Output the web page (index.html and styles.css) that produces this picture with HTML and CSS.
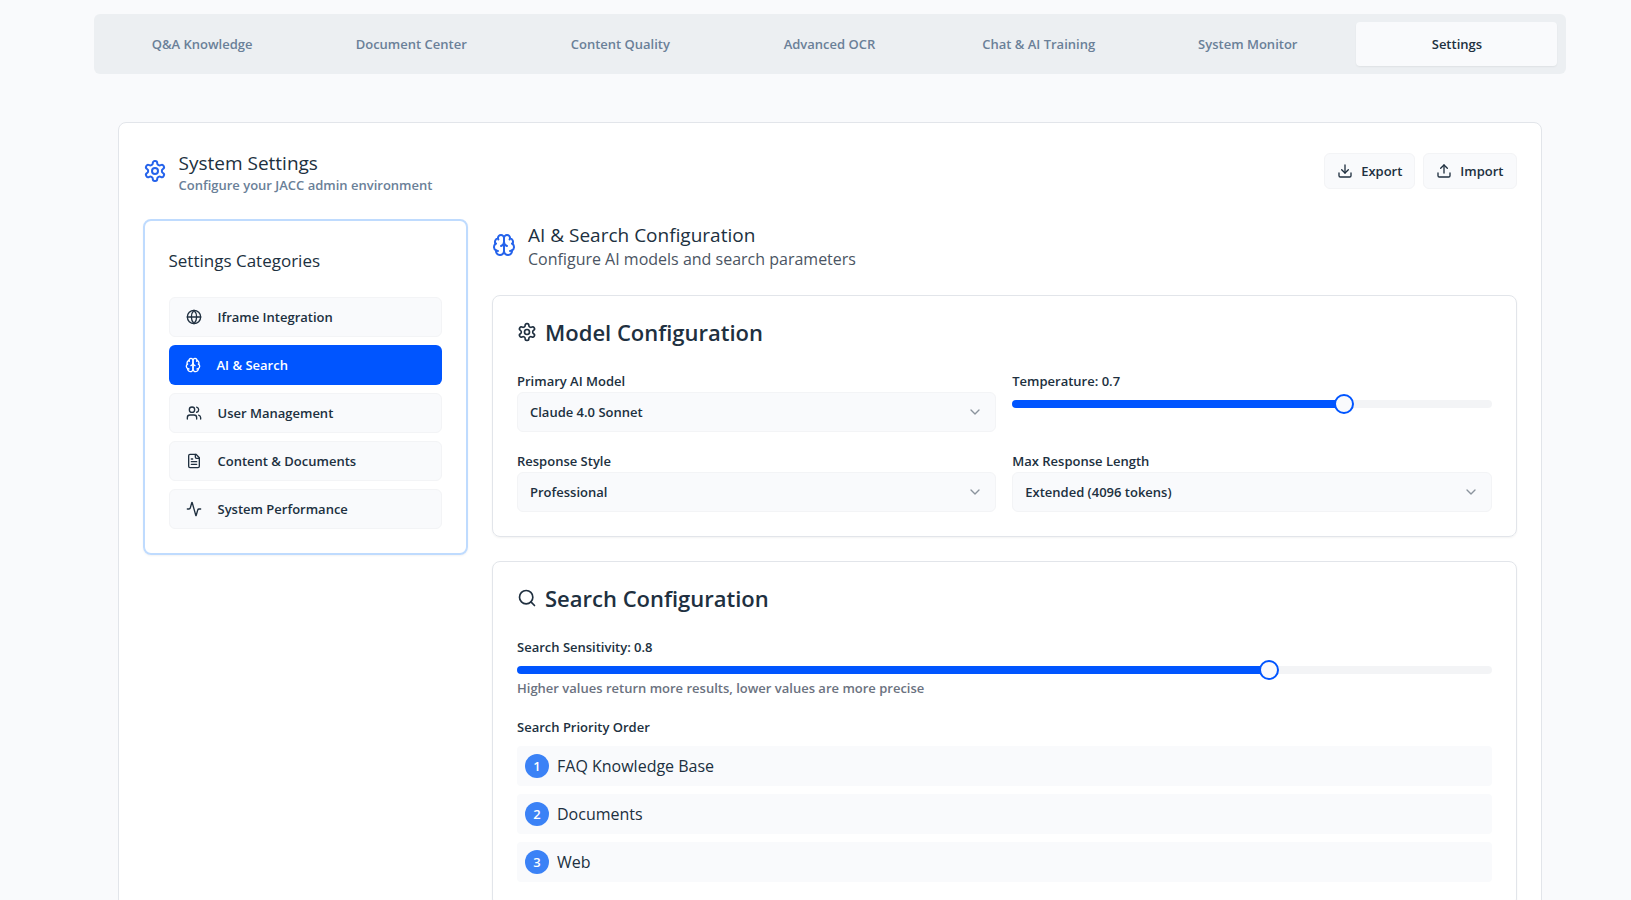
FILE: index.html
```
<!DOCTYPE html>
<html lang="en">
<head>
<meta charset="utf-8">
<title>System Settings</title>
<meta name="viewport" content="width=device-width, initial-scale=1">
<link rel="stylesheet" href="styles.css">
</head>
<body>
<svg class="sprite" aria-hidden="true">
  <symbol id="gear" viewBox="0 0 24 24"><path d="M12.22 2h-.44a2 2 0 0 0-2 2v.18a2 2 0 0 1-1 1.73l-.43.25a2 2 0 0 1-2 0l-.15-.08a2 2 0 0 0-2.73.73l-.22.38a2 2 0 0 0 .73 2.73l.15.1a2 2 0 0 1 1 1.72v.51a2 2 0 0 1-1 1.74l-.15.09a2 2 0 0 0-.73 2.73l.22.38a2 2 0 0 0 2.73.73l.15-.08a2 2 0 0 1 2 0l.43.25a2 2 0 0 1 1 1.73V20a2 2 0 0 0 2 2h.44a2 2 0 0 0 2-2v-.18a2 2 0 0 1 1-1.73l.43-.25a2 2 0 0 1 2 0l.15.08a2 2 0 0 0 2.73-.73l.22-.39a2 2 0 0 0-.73-2.73l-.15-.08a2 2 0 0 1-1-1.74v-.5a2 2 0 0 1 1-1.74l.15-.09a2 2 0 0 0 .73-2.73l-.22-.38a2 2 0 0 0-2.73-.73l-.15.08a2 2 0 0 1-2 0l-.43-.25a2 2 0 0 1-1-1.73V4a2 2 0 0 0-2-2z"/><circle cx="12" cy="12" r="3"/></symbol>
  <symbol id="brain" viewBox="0 0 24 24"><path d="M12 5a3 3 0 1 0-5.997.125 4 4 0 0 0-2.526 5.77 4 4 0 0 0 .556 6.588A4 4 0 1 0 12 18Z"/><path d="M12 5a3 3 0 1 1 5.997.125 4 4 0 0 1 2.526 5.77 4 4 0 0 1-.556 6.588A4 4 0 1 1 12 18Z"/><path d="M15 13a4.5 4.5 0 0 1-3-4 4.5 4.5 0 0 1-3 4"/><path d="M17.599 6.5a3 3 0 0 0 .399-1.375"/><path d="M6.003 5.125A3 3 0 0 0 6.401 6.5"/><path d="M3.477 10.896a4 4 0 0 1 .585-.396"/><path d="M19.938 10.5a4 4 0 0 1 .585.396"/><path d="M6 18a4 4 0 0 1-1.967-.516"/><path d="M19.967 17.484A4 4 0 0 1 18 18"/></symbol>
  <symbol id="globe" viewBox="0 0 24 24"><circle cx="12" cy="12" r="10"/><path d="M12 2a14.5 14.5 0 0 0 0 20 14.5 14.5 0 0 0 0-20"/><path d="M2 12h20"/></symbol>
  <symbol id="users" viewBox="0 0 24 24"><path d="M16 21v-2a4 4 0 0 0-4-4H6a4 4 0 0 0-4 4v2"/><circle cx="9" cy="7" r="4"/><path d="M22 21v-2a4 4 0 0 0-3-3.87"/><path d="M16 3.13a4 4 0 0 1 0 7.75"/></symbol>
  <symbol id="file" viewBox="0 0 24 24"><path d="M15 2H6a2 2 0 0 0-2 2v16a2 2 0 0 0 2 2h12a2 2 0 0 0 2-2V7Z"/><path d="M14 2v4a2 2 0 0 0 2 2h4"/><path d="M10 9H8"/><path d="M16 13H8"/><path d="M16 17H8"/></symbol>
  <symbol id="activity" viewBox="0 0 24 24"><path d="M22 12h-2.480a2 2 0 0 0-1.930 1.460l-2.350 8.360a.25.25 0 0 1-.480 0L9.240 2.180a.25.25 0 0 0-.480 0l-2.350 8.360A2 2 0 0 1 4.490 12H2"/></symbol>
  <symbol id="search" viewBox="0 0 24 24"><circle cx="11" cy="11" r="8"/><path d="m21 21-4.300-4.300"/></symbol>
  <symbol id="download" viewBox="0 0 24 24"><path d="M21 15v4a2 2 0 0 1-2 2H5a2 2 0 0 1-2-2v-4"/><path d="m7 10 5 5 5-5"/><path d="M12 15V3"/></symbol>
  <symbol id="upload" viewBox="0 0 24 24"><path d="M21 15v4a2 2 0 0 1-2 2H5a2 2 0 0 1-2-2v-4"/><path d="m17 8-5-5-5 5"/><path d="M12 3v12"/></symbol>
  <symbol id="chevron" viewBox="0 0 24 24"><path d="m6 9 6 6 6-6"/></symbol>
</svg>
<main class="page">
  <div class="container">
  <div class="tabs" role="tablist" aria-label="Admin sections">
    <button class="tab" role="tab" type="button">Q&amp;A Knowledge</button>
    <button class="tab" role="tab" type="button">Document Center</button>
    <button class="tab" role="tab" type="button">Content Quality</button>
    <button class="tab" role="tab" type="button">Advanced OCR</button>
    <button class="tab" role="tab" type="button">Chat &amp; AI Training</button>
    <button class="tab" role="tab" type="button">System Monitor</button>
    <button class="tab tab-active" role="tab" type="button" aria-selected="true">Settings</button>
  </div>

  <section class="panel">
    <header class="panel-header">
      <div class="heading">
        <svg class="icon icon-lg"><use href="#gear"/></svg>
        <div>
          <h1 class="title">System Settings</h1>
          <p class="subtitle">Configure your JACC admin environment</p>
        </div>
      </div>
      <div class="actions">
        <button class="btn" type="button"><svg class="icon"><use href="#download"/></svg>Export</button>
        <button class="btn" type="button"><svg class="icon"><use href="#upload"/></svg>Import</button>
      </div>
    </header>

    <div class="columns">
      <nav class="categories" aria-labelledby="categories-title">
        <h2 class="categories-title" id="categories-title">Settings Categories</h2>
        <div class="category-list">
          <button class="category" type="button"><svg class="icon"><use href="#globe"/></svg>Iframe Integration</button>
          <button class="category category-active" type="button" aria-current="true"><svg class="icon"><use href="#brain"/></svg>AI &amp; Search</button>
          <button class="category" type="button"><svg class="icon"><use href="#users"/></svg>User Management</button>
          <button class="category" type="button"><svg class="icon"><use href="#file"/></svg>Content &amp; Documents</button>
          <button class="category" type="button"><svg class="icon"><use href="#activity"/></svg>System Performance</button>
        </div>
      </nav>

      <div class="content">
        <div class="heading">
          <svg class="icon icon-lg"><use href="#brain"/></svg>
          <div>
            <h2 class="title">AI &amp; Search Configuration</h2>
            <p class="lead">Configure AI models and search parameters</p>
          </div>
        </div>

        <section class="card">
          <h3 class="card-title"><svg class="icon icon-md"><use href="#gear"/></svg>Model Configuration</h3>
          <div class="fields">
            <div class="field">
              <label class="label" for="model">Primary AI Model</label>
              <div class="select-wrap">
                <select class="select" id="model"><option>Claude 4.0 Sonnet</option></select>
                <svg class="icon chevron"><use href="#chevron"/></svg>
              </div>
            </div>
            <div class="field">
              <label class="label" for="temperature">Temperature: 0.7</label>
              <input class="slider" id="temperature" type="range" min="0" max="1" step="0.1" value="0.7" style="--fill: 70%">
            </div>
            <div class="field">
              <label class="label" for="style">Response Style</label>
              <div class="select-wrap">
                <select class="select" id="style"><option>Professional</option></select>
                <svg class="icon chevron"><use href="#chevron"/></svg>
              </div>
            </div>
            <div class="field">
              <label class="label" for="length">Max Response Length</label>
              <div class="select-wrap">
                <select class="select" id="length"><option>Extended (4096 tokens)</option></select>
                <svg class="icon chevron"><use href="#chevron"/></svg>
              </div>
            </div>
          </div>
        </section>

        <section class="card">
          <h3 class="card-title"><svg class="icon icon-md"><use href="#search"/></svg>Search Configuration</h3>
          <div class="stack">
            <div class="field">
              <label class="label" for="sensitivity">Search Sensitivity: 0.8</label>
              <input class="slider" id="sensitivity" type="range" min="0.1" max="1" step="0.1" value="0.8" style="--fill: 77.8%">
              <p class="hint">Higher values return more results, lower values are more precise</p>
            </div>
            <div class="field">
              <span class="label" id="priority-label">Search Priority Order</span>
              <ol class="priority" aria-labelledby="priority-label">
                <li class="priority-item"><span class="badge">1</span>FAQ Knowledge Base</li>
                <li class="priority-item"><span class="badge">2</span>Documents</li>
                <li class="priority-item"><span class="badge">3</span>Web</li>
              </ol>
            </div>
          </div>
        </section>
      </div>
    </div>
  </section>
  </div>
</main>
</body>
</html>
```
FILE: styles.css
```
:root {
  --page: #f9fafc;
  --ink: #203040;
  --muted: #6a8098;
  --line: #e2e5ea;
  --soft-line: #f3f4f6;
  --blue: #0055ff;
  --font: "Open Sans", "Noto Sans", sans-serif;
}

*, *::before, *::after { box-sizing: border-box; }

body {
  margin: 0;
  background: var(--page);
  color: var(--ink);
  font-family: var(--font);
  font-size: 15px;
  font-weight: 500;
  line-height: 24px;
}

h1, h2, h3, p, ol { margin: 0; padding: 0; font-weight: 500; }
button, select, input { font: inherit; color: inherit; margin: 0; }
svg { display: block; }
.sprite { position: absolute; width: 0; height: 0; }

.icon {
  flex: none;
  width: 16px;
  height: 16px;
  fill: none;
  stroke: currentColor;
  stroke-width: 2;
  stroke-linecap: round;
  stroke-linejoin: round;
}
.icon-md { width: 20px; height: 20px; }
.icon-lg { width: 24px; height: 24px; color: #2563eb; }

.page { padding: 14px 0 24px 28px; }
.container { max-width: 1472px; margin: 0 auto; }

.tabs {
  display: grid;
  grid-template-columns: repeat(7, 1fr);
  gap: 8px;
  padding: 8px;
  border-radius: 6px;
  background: #eceff2;
}
.tab {
  height: 44px;
  padding: 0 12px;
  border: 0;
  border-radius: 4px;
  background: none;
  color: var(--muted);
  font-size: 13px;
  font-weight: 600;
}
.tab-active {
  background: var(--page);
  color: var(--ink);
  box-shadow: 0 1px 2px rgba(0, 0, 0, .06);
}

.panel {
  margin: 48px 24px 0;
  padding: 24px;
  border: 1px solid var(--line);
  border-radius: 8px;
  background: #fff;
}
.panel-header {
  display: flex;
  align-items: center;
  justify-content: space-between;
  margin-bottom: 24px;
}
.heading { display: flex; align-items: center; gap: 12px; }
.title { padding-top: 4px; font-size: 19px; line-height: 24px; }
.subtitle { color: var(--muted); font-size: 13px; font-weight: 600; line-height: 20px; }
.lead { color: #4b5563; font-size: 16px; }

.actions { display: flex; gap: 8px; }
.btn {
  display: flex;
  align-items: center;
  gap: 8px;
  height: 36px;
  padding: 0 12px;
  border: 1px solid var(--soft-line);
  border-radius: 6px;
  background: var(--page);
  font-size: 13px;
  font-weight: 600;
}

.columns {
  display: grid;
  grid-template-columns: repeat(4, 1fr);
  gap: 24px;
  align-items: start;
}
.categories {
  padding: 24px;
  border: 2px solid #bfdbfe;
  border-radius: 8px;
  box-shadow: 0 1px 2px rgba(0, 0, 0, .05);
}
.categories-title {
  margin-bottom: 24px;
  padding-top: 4px;
  font-size: 17px;
  line-height: 24px;
}
.category-list { display: grid; gap: 8px; }
.category {
  display: flex;
  align-items: center;
  gap: 16px;
  height: 40px;
  padding: 0 16px;
  border: 1px solid var(--soft-line);
  border-radius: 6px;
  background: var(--page);
  font-size: 13px;
  font-weight: 600;
}
.category-active { border: 0; background: var(--blue); color: #fff; }

.content { grid-column: span 3; display: grid; gap: 24px; }
.card {
  padding: 24px;
  border: 1px solid var(--line);
  border-radius: 8px;
  box-shadow: 0 1px 2px rgba(0, 0, 0, .05);
}
.card-title {
  display: flex;
  align-items: center;
  gap: 8px;
  margin-bottom: 24px;
  font-size: 22px;
  font-weight: 600;
  line-height: 24px;
}
.fields { display: grid; grid-template-columns: 1fr 1fr; gap: 16px; }
.stack { display: grid; gap: 16px; }
.label {
  display: block;
  padding-top: 2px;
  font-size: 13px;
  font-weight: 600;
  line-height: 22px;
}

.select-wrap { display: grid; align-items: center; }
.select-wrap > * { grid-area: 1 / 1; }
.select {
  appearance: none;
  width: 100%;
  height: 40px;
  padding: 0 40px 0 12px;
  border: 1px solid var(--soft-line);
  border-radius: 6px;
  background: var(--page);
  font-size: 13px;
  font-weight: 600;
}
.chevron { justify-self: end; margin-right: 13px; opacity: .5; pointer-events: none; }

.slider {
  appearance: none;
  display: block;
  width: 100%;
  height: 8px;
  margin-top: 8px;
  border-radius: 4px;
  background: linear-gradient(to right, var(--blue) var(--fill), #f3f4f6 var(--fill));
}
.slider::-webkit-slider-runnable-track { height: 8px; }
.slider::-webkit-slider-thumb {
  appearance: none;
  width: 20px;
  height: 20px;
  margin-top: -6px;
  border: 2px solid var(--blue);
  border-radius: 50%;
  background: var(--page);
}
.hint { margin-top: 4px; color: #6b7280; font-size: 13px; font-weight: 600; line-height: 20px; }

.priority { display: grid; gap: 8px; margin-top: 8px; list-style: none; }
.priority-item {
  display: flex;
  align-items: center;
  gap: 8px;
  padding: 8px;
  border-radius: 4px;
  background: var(--page);
  font-size: 16px;
}
.badge {
  width: 24px;
  height: 24px;
  border-radius: 50%;
  background: #3b82f6;
  color: #fff;
  font-size: 13px;
  font-weight: 600;
  text-align: center;
}
```
